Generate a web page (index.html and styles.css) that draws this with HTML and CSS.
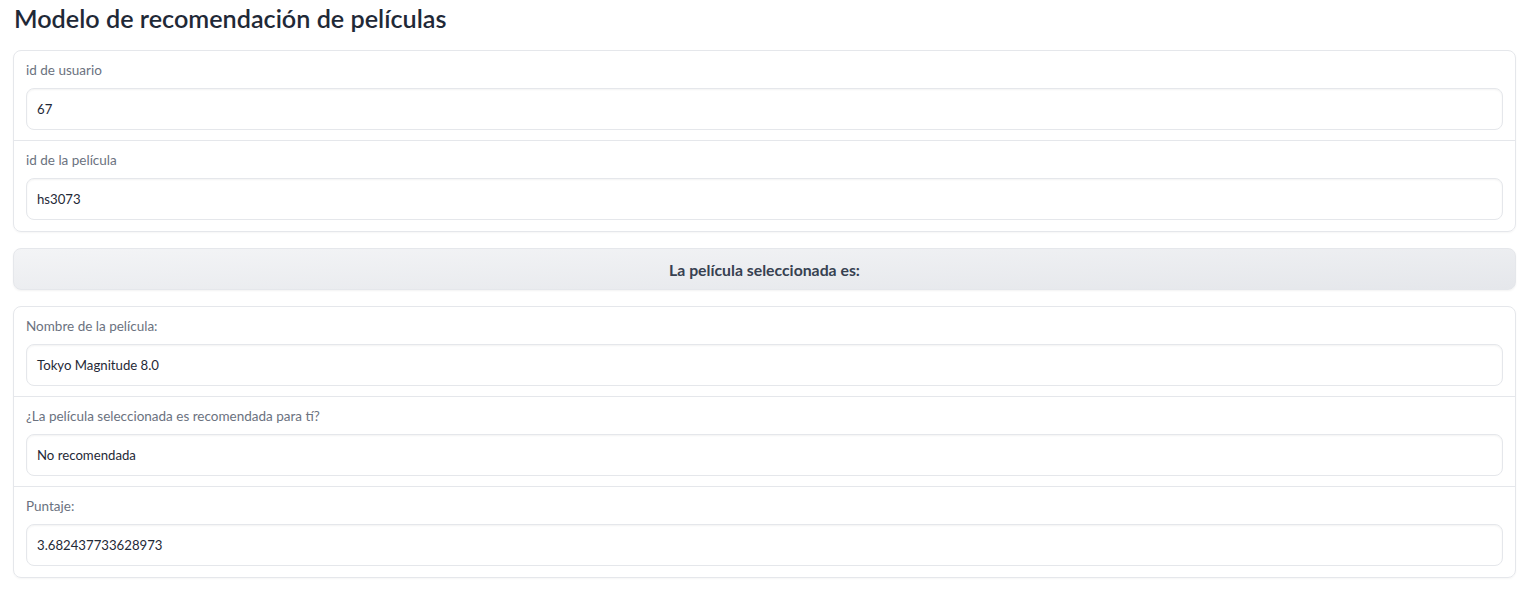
FILE: index.html
```html
<!DOCTYPE html>
<html lang="es">
<head>
<meta charset="utf-8">
<title>Modelo de recomendación de películas</title>
<link rel="stylesheet" href="styles.css">
</head>
<body>
<div class="app">
  <h1 class="title">Modelo de recomendación de películas</h1>
  <div class="form">
    <div class="field">
      <span class="label">id de usuario</span>
      <div class="input">67</div>
    </div>
    <div class="field">
      <span class="label">id de la película</span>
      <div class="input">hs3073</div>
    </div>
  </div>
  <button class="btn" type="button">La película seleccionada es:</button>
  <div class="form">
    <div class="field">
      <span class="label">Nombre de la película:</span>
      <div class="input">Tokyo Magnitude 8.0</div>
    </div>
    <div class="field">
      <span class="label">¿La película seleccionada es recomendada para tí?</span>
      <div class="input">No recomendada</div>
    </div>
    <div class="field">
      <span class="label">Puntaje:</span>
      <div class="input">3.682437733628973</div>
    </div>
  </div>
</div>
</body>
</html>
```
FILE: styles.css
```css
* { box-sizing: border-box; }
html, body { margin: 0; padding: 0; background: #ffffff; }
body {
  font-family: "Lato", "Noto Sans", sans-serif;
  color: #1f2937;
}
.app {
  padding: 0 24px 0 13px;
  display: flex;
  flex-direction: column;
}
.title {
  margin: 0;
  padding: 3px 0 0 1px;
  height: 50px;
  font-size: 25.2px;
  font-weight: 600;
  line-height: 30px;
  color: #1f2937;
}
.form {
  border: 1px solid #e5e7eb;
  border-radius: 8px;
  box-shadow: 0 1px 2px rgba(0,0,0,0.04);
  display: flex;
  flex-direction: column;
  margin-bottom: 16px;
}
.field {
  padding: 10px 12px 10px 12px;
  border-top: 1px solid #e5e7eb;
  display: flex;
  flex-direction: column;
}
.field:first-child { border-top: none; }
.field:last-child { padding-bottom: 11px; }
.label {
  font-size: 13.5px;
  line-height: 18px;
  color: #6b7280;
  margin-bottom: 9px;
}
.input {
  height: 42px;
  border: 1px solid #e5e7eb;
  border-radius: 8px;
  padding: 0 10px;
  font-size: 13.2px;
  line-height: 40px;
  color: #1f2937;
  box-shadow: inset 0 1px 2px rgba(0,0,0,0.05);
  background: #ffffff;
}
.btn {
  height: 42px;
  margin-bottom: 16px;
  border: 1px solid #e5e7eb;
  border-radius: 8px;
  background: linear-gradient(to bottom right, #f3f4f6, #e5e7eb);
  font-family: inherit;
  font-size: 15.8px;
  font-weight: 700;
  color: #374151;
  box-shadow: 0 1px 2px rgba(0,0,0,0.05);
}
```
